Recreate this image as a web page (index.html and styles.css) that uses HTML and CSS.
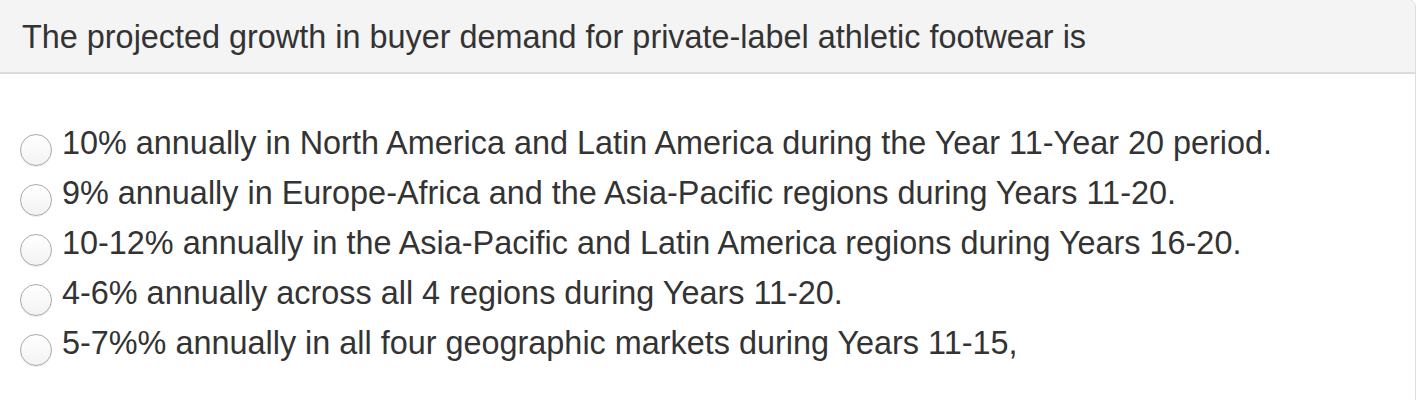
FILE: index.html
```html
<!DOCTYPE html>
<html>
<head>
<meta charset="utf-8">
<link rel="stylesheet" href="styles.css">
</head>
<body>
<div class="panel">
  <div class="panel-heading">The projected growth in buyer demand for private-label athletic footwear is</div>
  <div class="panel-body">
    <label class="option"><span class="radio"></span><span class="text">10% annually in North America and Latin America during the Year 11-Year 20 period.</span></label>
    <label class="option"><span class="radio"></span><span class="text">9% annually in Europe-Africa and the Asia-Pacific regions during Years 11-20.</span></label>
    <label class="option"><span class="radio"></span><span class="text">10-12% annually in the Asia-Pacific and Latin America regions during Years 16-20.</span></label>
    <label class="option"><span class="radio"></span><span class="text">4-6% annually across all 4 regions during Years 11-20.</span></label>
    <label class="option"><span class="radio"></span><span class="text">5-7%% annually in all four geographic markets during Years 11-15,</span></label>
  </div>
</div>
</body>
</html>
```
FILE: styles.css
```css
html, body {
  margin: 0;
  padding: 0;
  background: #fff;
}
body {
  font-family: "Liberation Sans", Arial, sans-serif;
  color: #333;
  width: 1420px;
  height: 400px;
  overflow: hidden;
}
.panel {
  margin: -1px 0 0 -1px;
  width: 1417px;
  height: 420px;
  border: 1px solid #ddd;
  border-top-right-radius: 8px;
  box-sizing: border-box;
}
.panel-heading {
  background: #f4f4f4;
  border-bottom: 2px solid #dcdcdc;
  height: 74px;
  box-sizing: border-box;
  padding: 0 0 0 22px;
  font-size: 32.4px;
  line-height: 74px;
  border-top-right-radius: 7px;
}
.panel-body {
  padding: 44px 0 0 20px;
  display: flex;
  flex-direction: column;
}
.option {
  display: flex;
  align-items: center;
  height: 50px;
  font-size: 32.4px;
}
.radio {
  width: 30px;
  height: 30px;
  border-radius: 50%;
  border: 1px solid #aaa;
  background: linear-gradient(#fff, #f3f3f3);
  box-shadow: inset 0 1px 1px rgba(255,255,255,0.8), 0 1px 1px rgba(0,0,0,0.08);
  flex: none;
  margin-right: 10px;
  position: relative;
  top: 7px;
}
```
